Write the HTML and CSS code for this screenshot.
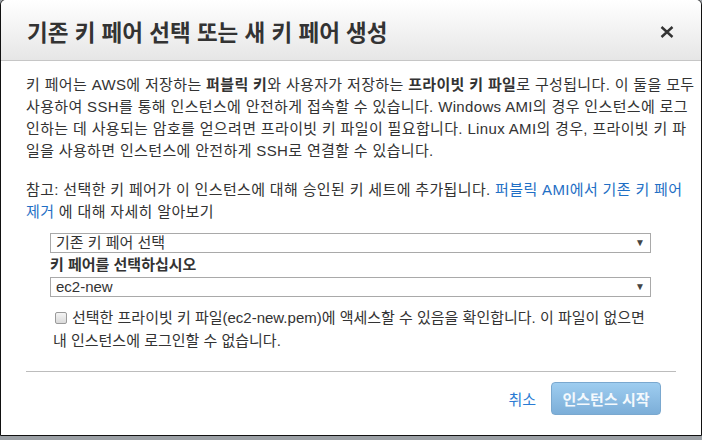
FILE: index.html
```html
<!DOCTYPE html>
<html lang="ko">

<head>
  <meta charset="UTF-8" />
  <title>기존 키 페어 선택 또는 새 키 페어 생성</title>
  <link rel="stylesheet" href="styles.css">
</head>

<body>
  <div class="modal">
    <div class="modal-header">
      <h1 class="modal-title">기존 키 페어 선택 또는 새 키 페어 생성</h1>
      <button class="close-btn" aria-label="닫기">
        <svg width="14" height="12" viewBox="0 0 14 12">
          <path d="M1.5 1 L12.5 11 M12.5 1 L1.5 11" stroke="#333" stroke-width="2.4" fill="none" />
        </svg>
      </button>
    </div>

    <div class="modal-body">
      <p class="desc">키 페어는 AWS에 저장하는 <b>퍼블릭 키</b>와 사용자가 저장하는 <b>프라이빗 키 파일</b>로 구성됩니다. 이 둘을 모두<br>
        사용하여 SSH를 통해 인스턴스에 안전하게 접속할 수 있습니다. Windows AMI의 경우 인스턴스에 로그<br>
        인하는 데 사용되는 암호를 얻으려면 프라이빗 키 파일이 필요합니다. Linux AMI의 경우, 프라이빗 키 파<br>
        일을 사용하면 인스턴스에 안전하게 SSH로 연결할 수 있습니다.</p>

      <p class="note">참고: 선택한 키 페어가 이 인스턴스에 대해 승인된 키 세트에 추가됩니다. <a href="#">퍼블릭 AMI에서 기존 키 페어<br>
          제거</a> 에 대해 자세히 알아보기</p>

      <div class="key-form">
        <div class="select">
          <span>기존 키 페어 선택</span>
          <span class="arrow">▼</span>
        </div>
        <div class="field-label">키 페어를 선택하십시오</div>
        <div class="select">
          <span>ec2-new</span>
          <span class="arrow">▼</span>
        </div>
        <div class="ack">
          <span class="check"></span>선택한 프라이빗 키 파일(ec2-new.pem)에 액세스할 수 있음을 확인합니다. 이 파일이 없으면<br>
          내 인스턴스에 로그인할 수 없습니다.
        </div>
      </div>
    </div>

    <div class="modal-footer">
      <a href="#" class="cancel">취소</a>
      <button class="launch-btn">인스턴스 시작</button>
    </div>
  </div>
</body>

</html>
```

FILE: styles.css
```css
* {
  margin: 0;
  padding: 0;
  box-sizing: border-box;
}

body {
  background-color: #9ba0a5;
  font-family: "Liberation Sans", "Noto Sans CJK KR", sans-serif;
  font-size: 15px;
  color: #333;
  overflow: hidden;
}

.modal {
  width: 702px;
  height: 437px;
  margin-top: -1px;
  background: #fff;
  border: 1px solid #111;
  border-radius: 6px 6px 0 0;
  overflow: hidden;
}

.modal-header {
  height: 61px;
  display: flex;
  align-items: center;
  justify-content: space-between;
  padding: 0 27px 0 26px;
  background: linear-gradient(#ffffff, #e6e6e6);
  border-bottom: 1px solid #c6c6c6;
}

.modal-title {
  font-size: 22.5px;
  font-weight: bold;
  color: #333;
  margin-top: 2px;
}

.close-btn {
  border: none;
  background: none;
  display: flex;
  margin-top: 3px;
}

.modal-body {
  padding: 13px 25px 0 25px;
  line-height: 22px;
  white-space: nowrap;
}

.desc,
.note {
  letter-spacing: 0.35px;
}

.desc b {
  font-weight: bold;
}

.note {
  margin-top: 17px;
}

.note a {
  color: #1f6fc5;
  text-decoration: none;
}

.key-form {
  margin: 10px 0 0 24px;
  width: 601px;
}

.select {
  height: 20px;
  border: 1px solid #a9a9a9;
  display: flex;
  align-items: center;
  justify-content: space-between;
  padding: 0 5px 0 5px;
  line-height: 18px;
}

.arrow {
  font-size: 10px;
  color: #444;
}

.field-label {
  font-weight: bold;
  line-height: 24px;
}

.ack {
  margin-top: 9px;
  line-height: 23px;
  padding-left: 3px;
}

.check {
  display: inline-block;
  width: 12px;
  height: 12px;
  border: 1px solid #9a9a9a;
  border-radius: 2px;
  background: linear-gradient(#f4f4f4, #dadada);
  vertical-align: -1px;
  margin: 0 5px 0 2px;
}

.modal-footer {
  margin: 19px 25px 0 25px;
  border-top: 1px solid #bcbcbc;
  padding: 10px 15px 0 0;
  display: flex;
  justify-content: flex-end;
  align-items: center;
  gap: 15px;
}

.cancel {
  color: #2b7bd3;
  text-decoration: none;
  font-size: 15px;
}

.launch-btn {
  width: 110px;
  height: 33px;
  border: 1px solid #7aa8cf;
  border-radius: 4px;
  background: linear-gradient(#9ecdf0, #7caed8);
  color: #f4f9fd;
  font-family: inherit;
  font-size: 15px;
  font-weight: bold;
}
```
